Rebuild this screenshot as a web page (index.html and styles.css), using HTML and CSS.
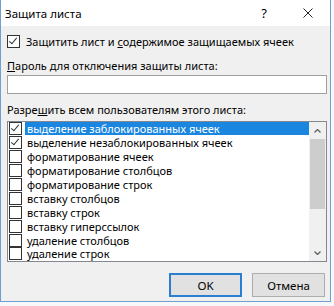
FILE: index.html
```html
<!DOCTYPE html>
<html lang="ru">
  <head>
    <meta charset="UTF-8" />
    <title>Защита листа</title>
    <link rel="stylesheet" href="styles.css">
  </head>
  <body>
    <div class="dialog">
      <div class="titlebar">
        <span class="title">Защита листа</span>
        <span class="help">?</span>
        <svg class="close" viewBox="0 0 10 10">
          <path d="M0.5 0.5 L9.5 9.5 M9.5 0.5 L0.5 9.5"></path>
        </svg>
      </div>
      <div class="content">
        <label class="protect">
          <span class="box checked"></span>
          <span>Защитить лист и <u>с</u>одержимое защищаемых ячеек</span>
        </label>
        <div class="caption pwd"><u>П</u>ароль для отключения защиты листа:</div>
        <div class="input"></div>
        <div class="caption allow">Разре<u>ш</u>ить всем пользователям этого листа:</div>
        <div class="list">
          <div class="items">
            <div class="item"><span class="box checked"></span><span class="label selected">выделение заблокированных ячеек</span></div>
            <div class="item"><span class="box checked"></span><span class="label">выделение незаблокированных ячеек</span></div>
            <div class="item"><span class="box"></span><span class="label">форматирование ячеек</span></div>
            <div class="item"><span class="box"></span><span class="label">форматирование столбцов</span></div>
            <div class="item"><span class="box"></span><span class="label">форматирование строк</span></div>
            <div class="item"><span class="box"></span><span class="label">вставку столбцов</span></div>
            <div class="item"><span class="box"></span><span class="label">вставку строк</span></div>
            <div class="item"><span class="box"></span><span class="label">вставку гиперссылок</span></div>
            <div class="item"><span class="box"></span><span class="label">удаление столбцов</span></div>
            <div class="item"><span class="box"></span><span class="label">удаление строк</span></div>
          </div>
          <div class="scrollbar">
            <div class="arrow">
              <svg viewBox="0 0 7 4"><polyline points="0.5,3.5 3.5,0.5 6.5,3.5"></polyline></svg>
            </div>
            <div class="track">
              <div class="thumb"></div>
            </div>
            <div class="arrow">
              <svg viewBox="0 0 7 4"><polyline points="0.5,0.5 3.5,3.5 6.5,0.5"></polyline></svg>
            </div>
          </div>
        </div>
        <div class="buttons">
          <button class="btn default">OK</button>
          <button class="btn">Отмена</button>
        </div>
      </div>
    </div>
  </body>
</html>
```

FILE: styles.css
```css
* {
  margin: 0;
  padding: 0;
  box-sizing: border-box;
}
body {
  width: 334px;
  height: 306px;
  overflow: hidden;
  background: #f6f8fa;
  font-family: "Noto Sans", "Open Sans", sans-serif;
  font-size: 11px;
  color: #000;
}
.dialog {
  width: 331px;
  border: 1px solid #6f9fd0;
  border-top: none;
  background: #f0f0f0;
}
.titlebar {
  height: 26px;
  background: #fff;
  display: flex;
  align-items: center;
  padding-left: 4px;
}
.title {
  flex: 1;
  font-size: 11.5px;
}
.help {
  font-size: 13px;
  margin-right: 36px;
}
.close {
  width: 10px;
  height: 10px;
  margin-right: 17px;
}
.close path {
  stroke: #222;
  stroke-width: 1;
  fill: none;
}
.content {
  padding: 0 3px 4px 6px;
  display: flex;
  flex-direction: column;
}
.protect {
  margin-top: 9px;
  height: 13px;
  display: flex;
  align-items: center;
  gap: 6px;
}
.box {
  width: 13px;
  height: 13px;
  flex: none;
  border: 1px solid #333;
  background: #fff;
  position: relative;
}
.box.checked::after {
  content: "";
  position: absolute;
  left: 3px;
  top: 0px;
  width: 3px;
  height: 7px;
  border-right: 1px solid #333;
  border-bottom: 1px solid #333;
  transform: rotate(40deg);
}
.caption {
  height: 14px;
  line-height: 14px;
}
.pwd {
  margin-top: 11px;
}
.input {
  margin-top: 2px;
  width: 320px;
  height: 19px;
  border: 1px solid #a0a0a0;
  background: #fff;
}
.allow {
  margin-top: 9px;
}
.list {
  margin-top: 4px;
  width: 320px;
  height: 141px;
  border: 1px solid #828790;
  background: #fff;
  display: flex;
}
.items {
  flex: 1;
  display: flex;
  flex-direction: column;
}
.item {
  height: 13.9px;
  display: flex;
  align-items: center;
  padding-left: 1px;
}
.label {
  flex: 1;
  margin-left: 3px;
  padding-left: 2px;
  line-height: 13px;
}
.label.selected {
  background: #1a86e0;
  color: #fff;
}
.scrollbar {
  width: 17px;
  background: #f0f0f0;
  display: flex;
  flex-direction: column;
}
.arrow {
  height: 17px;
  display: flex;
  align-items: center;
  justify-content: center;
}
.arrow svg {
  width: 7px;
  height: 4px;
}
.arrow polyline {
  fill: none;
  stroke: #606060;
  stroke-width: 1.3;
}
.track {
  flex: 1;
  padding: 0 1px;
}
.thumb {
  height: 70px;
  background: #cdcdcd;
}
.buttons {
  margin-top: 11px;
  display: flex;
  justify-content: flex-end;
  gap: 10px;
  padding-right: 2px;
}
.btn {
  width: 73px;
  height: 24px;
  border: 1px solid #adadad;
  background: #e1e1e1;
  font-family: inherit;
  font-size: 11.5px;
  color: #000;
}
.btn.default {
  border: 2px solid #2a7fd0;
}
```
